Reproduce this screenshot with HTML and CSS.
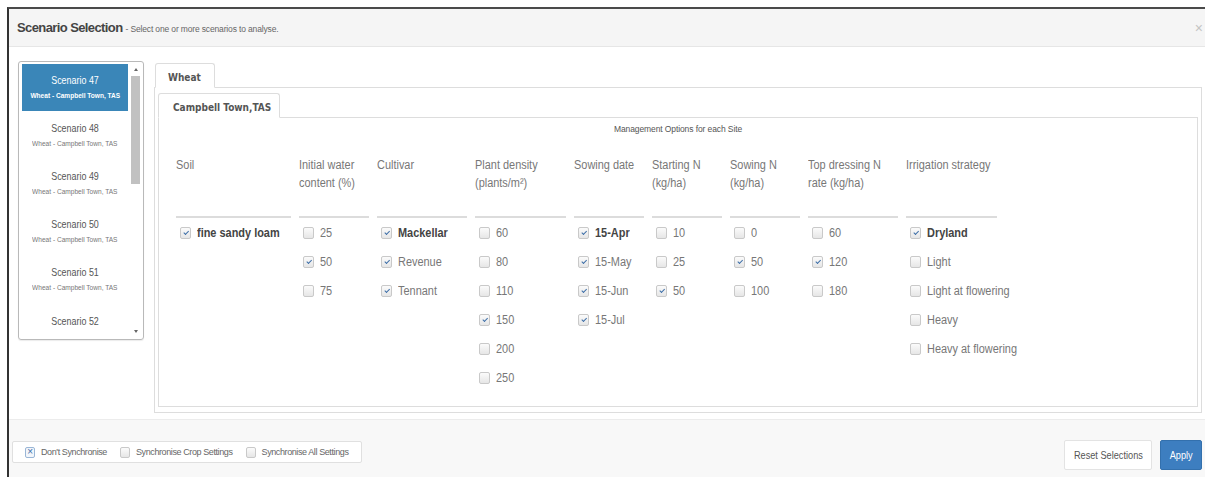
FILE: index.html
```html
<!DOCTYPE html>
<html lang="en">
<head>
<meta charset="utf-8">
<title>Scenario Selection</title>
<link rel="stylesheet" href="styles.css">
</head>
<body>
<div class="modal">
  <div class="modal-header">
    <span class="title">Scenario Selection</span>
    <span class="subtitle">- Select one or more scenarios to analyse.</span>
    <span class="close">×</span>
  </div>

  <div class="modal-body">
    <div class="scenario-list">
      <div class="items">
        <div class="item active"><span class="t c name">Scenario 47</span><span class="t c desc">Wheat - Campbell Town, TAS</span></div>
        <div class="item"><span class="t c name">Scenario 48</span><span class="t c desc">Wheat - Campbell Town, TAS</span></div>
        <div class="item"><span class="t c name">Scenario 49</span><span class="t c desc">Wheat - Campbell Town, TAS</span></div>
        <div class="item"><span class="t c name">Scenario 50</span><span class="t c desc">Wheat - Campbell Town, TAS</span></div>
        <div class="item"><span class="t c name">Scenario 51</span><span class="t c desc">Wheat - Campbell Town, TAS</span></div>
        <div class="item last"><span class="t c name">Scenario 52</span></div>
      </div>
      <div class="scrollbar">
        <span class="arrow up"></span>
        <div class="track"><div class="thumb"></div></div>
        <span class="arrow down"></span>
      </div>
    </div>

    <div class="crop-tabs">
      <ul class="tabs crop">
        <li class="tab active">Wheat</li>
      </ul>
      <div class="tab-pane">
        <ul class="tabs site">
          <li class="tab active">Campbell Town,TAS</li>
        </ul>
        <div class="site-pane">
          <div class="caption">Management Options for each Site</div>
          <div class="options">
            <div class="col">
              <div class="col-head"><span class="t">Soil</span></div>
              <label class="opt strong"><span class="cb on"></span><span class="t">fine sandy loam</span></label>
            </div>
            <div class="col">
              <div class="col-head"><span class="t">Initial water<br>content (%)</span></div>
              <label class="opt"><span class="cb"></span><span class="t">25</span></label>
              <label class="opt"><span class="cb on"></span><span class="t">50</span></label>
              <label class="opt"><span class="cb"></span><span class="t">75</span></label>
            </div>
            <div class="col">
              <div class="col-head"><span class="t">Cultivar</span></div>
              <label class="opt strong"><span class="cb on"></span><span class="t">Mackellar</span></label>
              <label class="opt"><span class="cb on"></span><span class="t">Revenue</span></label>
              <label class="opt"><span class="cb on"></span><span class="t">Tennant</span></label>
            </div>
            <div class="col">
              <div class="col-head"><span class="t">Plant density<br>(plants/m²)</span></div>
              <label class="opt"><span class="cb"></span><span class="t">60</span></label>
              <label class="opt"><span class="cb"></span><span class="t">80</span></label>
              <label class="opt"><span class="cb"></span><span class="t">110</span></label>
              <label class="opt"><span class="cb on"></span><span class="t">150</span></label>
              <label class="opt"><span class="cb"></span><span class="t">200</span></label>
              <label class="opt"><span class="cb"></span><span class="t">250</span></label>
            </div>
            <div class="col">
              <div class="col-head"><span class="t">Sowing date</span></div>
              <label class="opt strong"><span class="cb on"></span><span class="t">15-Apr</span></label>
              <label class="opt"><span class="cb on"></span><span class="t">15-May</span></label>
              <label class="opt"><span class="cb on"></span><span class="t">15-Jun</span></label>
              <label class="opt"><span class="cb on"></span><span class="t">15-Jul</span></label>
            </div>
            <div class="col">
              <div class="col-head"><span class="t">Starting N<br>(kg/ha)</span></div>
              <label class="opt"><span class="cb"></span><span class="t">10</span></label>
              <label class="opt"><span class="cb"></span><span class="t">25</span></label>
              <label class="opt"><span class="cb on"></span><span class="t">50</span></label>
            </div>
            <div class="col">
              <div class="col-head"><span class="t">Sowing N<br>(kg/ha)</span></div>
              <label class="opt"><span class="cb"></span><span class="t">0</span></label>
              <label class="opt"><span class="cb on"></span><span class="t">50</span></label>
              <label class="opt"><span class="cb"></span><span class="t">100</span></label>
            </div>
            <div class="col">
              <div class="col-head"><span class="t">Top dressing N<br>rate (kg/ha)</span></div>
              <label class="opt"><span class="cb"></span><span class="t">60</span></label>
              <label class="opt"><span class="cb on"></span><span class="t">120</span></label>
              <label class="opt"><span class="cb"></span><span class="t">180</span></label>
            </div>
            <div class="col">
              <div class="col-head"><span class="t">Irrigation strategy</span></div>
              <label class="opt strong"><span class="cb on"></span><span class="t">Dryland</span></label>
              <label class="opt"><span class="cb"></span><span class="t">Light</span></label>
              <label class="opt"><span class="cb"></span><span class="t">Light at flowering</span></label>
              <label class="opt"><span class="cb"></span><span class="t">Heavy</span></label>
              <label class="opt"><span class="cb"></span><span class="t">Heavy at flowering</span></label>
            </div>
          </div>
        </div>
      </div>
    </div>
  </div>

  <div class="modal-footer">
    <div class="sync-group">
      <label class="sync"><span class="cb cross"></span>Don't Synchronise</label>
      <label class="sync"><span class="cb"></span>Synchronise Crop Settings</label>
      <label class="sync"><span class="cb"></span>Synchronise All Settings</label>
    </div>
    <div class="actions">
      <button class="btn reset"><span class="t c">Reset Selections</span></button>
      <button class="btn primary"><span class="t c">Apply</span></button>
    </div>
  </div>
</div>
</body>
</html>
```

FILE: styles.css
```css
* { box-sizing: border-box; }

html, body {
  margin: 0;
  padding: 0;
  background: #fff;
  width: 1205px;
  height: 477px;
  overflow: hidden;
  font-family: "Liberation Sans", Arial, sans-serif;
  color: #777;
}

body { padding: 7px 0 0 7px; }

/* the app font is a narrow grotesque: squeeze the text horizontally */
.t {
  display: inline-block;
  white-space: nowrap;
  transform: scaleX(0.875);
  transform-origin: 0 50%;
}
.t.c { transform-origin: 50% 50%; }

/* dialog frame */
.modal {
  height: 470px;
  border-top: 2px solid #4a4a4a;
  border-left: 2px solid #333;
  background: #fff;
  display: flex;
  flex-direction: column;
}

.modal-header {
  height: 38px;
  flex: none;
  background: #f5f5f5;
  border-bottom: 1px solid #e6e6e6;
  display: flex;
  align-items: center;
  padding: 0 0 0 8px;
}
.title {
  font-size: 13px;
  font-weight: bold;
  letter-spacing: -0.6px;
  color: #444;
}
.subtitle {
  font-size: 8.5px;
  letter-spacing: -0.15px;
  color: #666;
  margin-left: 3px;
  padding-top: 2px;
}
.close {
  margin-left: auto;
  margin-right: 2px;
  font-size: 14px;
  color: #c4c4c4;
}

/* body */
.modal-body {
  height: 372px;
  flex: none;
  display: flex;
  align-items: flex-start;
  padding: 14px 3px 0 9px;
}

/* scenario picker */
.scenario-list {
  width: 126px;
  height: 279px;
  flex: none;
  border: 1px solid #b9b9b9;
  border-radius: 3px;
  display: flex;
  align-items: flex-start;
  padding: 2px 1px 2px 3px;
  overflow: hidden;
  box-shadow: 0 1px 1px rgba(0,0,0,0.08);
}
.items {
  width: 106px;
  height: 266px;
  overflow: hidden;
}
.item {
  height: 48px;
  display: flex;
  flex-direction: column;
  align-items: center;
  justify-content: center;
  gap: 6px;
  color: #555;
}
.item.last {
  justify-content: flex-start;
  padding-top: 13px;
}
.item .name { font-size: 10.5px; line-height: 11px; transform: scaleX(0.85); }
.item .desc { font-size: 7.5px; line-height: 8px; color: #777; }
.item.active {
  background: #3a86b8;
  color: #fff;
  height: 47px;
}
.item.active .desc { color: #fff; font-weight: bold; }

.scrollbar {
  width: 11px;
  height: 100%;
  margin-left: 2px;
  display: flex;
  flex-direction: column;
  align-items: center;
}
.arrow {
  width: 0; height: 0;
  border-left: 2.5px solid transparent;
  border-right: 2.5px solid transparent;
  margin: 4px 0;
}
.arrow.up { border-bottom: 3px solid #666; }
.arrow.down { border-top: 3px solid #666; }
.track { flex: 1; width: 100%; }
.thumb {
  width: 9px;
  height: 108px;
  margin: 1px auto 0;
  background: #c1c1c1;
}

/* crop / site tabs */
.crop-tabs {
  flex: 1;
  margin-left: 10px;
  margin-top: 2px;
}
.tabs {
  list-style: none;
  margin: 0;
  padding: 0;
  display: flex;
  border-bottom: 1px solid #ddd;
}
.tab {
  margin-bottom: -1px;
  height: 25px;
  padding: 3px 0 0 13px;
  display: flex;
  align-items: center;
  font-family: "DejaVu Sans Condensed", "Liberation Sans", sans-serif;
  font-weight: bold;
  font-size: 10px;
  color: #555;
  background: #fff;
  border: 1px solid #ddd;
  border-bottom-color: #fff;
  border-radius: 3px 3px 0 0;
}
.tabs.crop .tab { margin-left: 1px; width: 60px; padding-left: 12px; }
.tab-pane {
  border: 1px solid #ddd;
  border-top: 0;
  padding: 5px 3px 3px 3px;
  height: 325px;
}
.tabs.site .tab { width: 122px; padding-left: 14px; }
.site-pane {
  border: 1px solid #ddd;
  border-top: 0;
  height: 289px;
  padding: 5px 0 0 0;
}
.caption {
  font-size: 8.5px;
  letter-spacing: -0.1px;
  color: #555;
  text-align: center;
  line-height: 12px;
}

/* option columns */
.options {
  display: grid;
  grid-template-columns: 115px 70px 90px 91px 70px 70px 70px 90px 91px;
  column-gap: 8px;
  margin: 21px 0 0 17px;
  align-items: start;
}
.col-head {
  height: 62px;
  border-bottom: 2px solid #dcdcdc;
  font-size: 12.5px;
  line-height: 18px;
  color: #777;
}
.opt {
  height: 29px;
  display: flex;
  align-items: center;
  font-size: 12.5px;
  color: #777;
}
.opt.strong { font-weight: bold; color: #444; }

/* checkboxes */
.cb {
  width: 11px;
  height: 12px;
  flex: none;
  border: 1px solid #c9c9c9;
  border-radius: 2px;
  background: linear-gradient(#fbfbfb, #e6e6e6);
  margin: 0 6px 0 4px;
  position: relative;
}
.cb.on::after {
  content: "";
  position: absolute;
  left: 2px;
  top: 2px;
  width: 4px;
  height: 2px;
  border-left: 1.5px solid #3e6fa8;
  border-bottom: 1.5px solid #3e6fa8;
  transform: rotate(-45deg) translate(0, 1px);
}
.cb.cross::after {
  content: "×";
  position: absolute;
  left: 0; right: 0; top: -1px;
  text-align: center;
  font-size: 10px;
  line-height: 10px;
  color: #3e6fa8;
}
.cb.cross { border-color: #9ab6d6; background: #f2f6fb; }

/* footer */
.modal-footer {
  flex: 1;
  background: #f8f8f8;
  border-top: 1px solid #ececec;
  display: flex;
  align-items: flex-start;
  padding: 21px 3px 0 3px;
}
.sync-group {
  height: 22px;
  display: flex;
  align-items: center;
  background: #fff;
  border: 1px solid #e0e0e0;
  border-radius: 2px;
  padding: 0 13px 0 12px;
}
.sync {
  display: flex;
  align-items: center;
  font-size: 9px;
  letter-spacing: -0.4px;
  color: #666;
  margin-right: 13px;
}
.sync:last-child { margin-right: 0; }
.sync .cb { width: 10px; height: 11px; margin: 0 6px 0 0; }
.actions {
  margin-left: auto;
  display: flex;
  gap: 8px;
  margin-top: -1px;
}
.btn {
  height: 30px;
  font-family: inherit;
  font-size: 10.5px;
  color: #555;
  background: #fff;
  border: 1px solid #e3e3e3;
  border-radius: 2px;
  padding: 0;
}
.btn.reset { width: 88px; }
.btn.primary {
  background: #3d7ec0;
  border-color: #3370ad;
  color: #fff;
  width: 42px;
}
```
